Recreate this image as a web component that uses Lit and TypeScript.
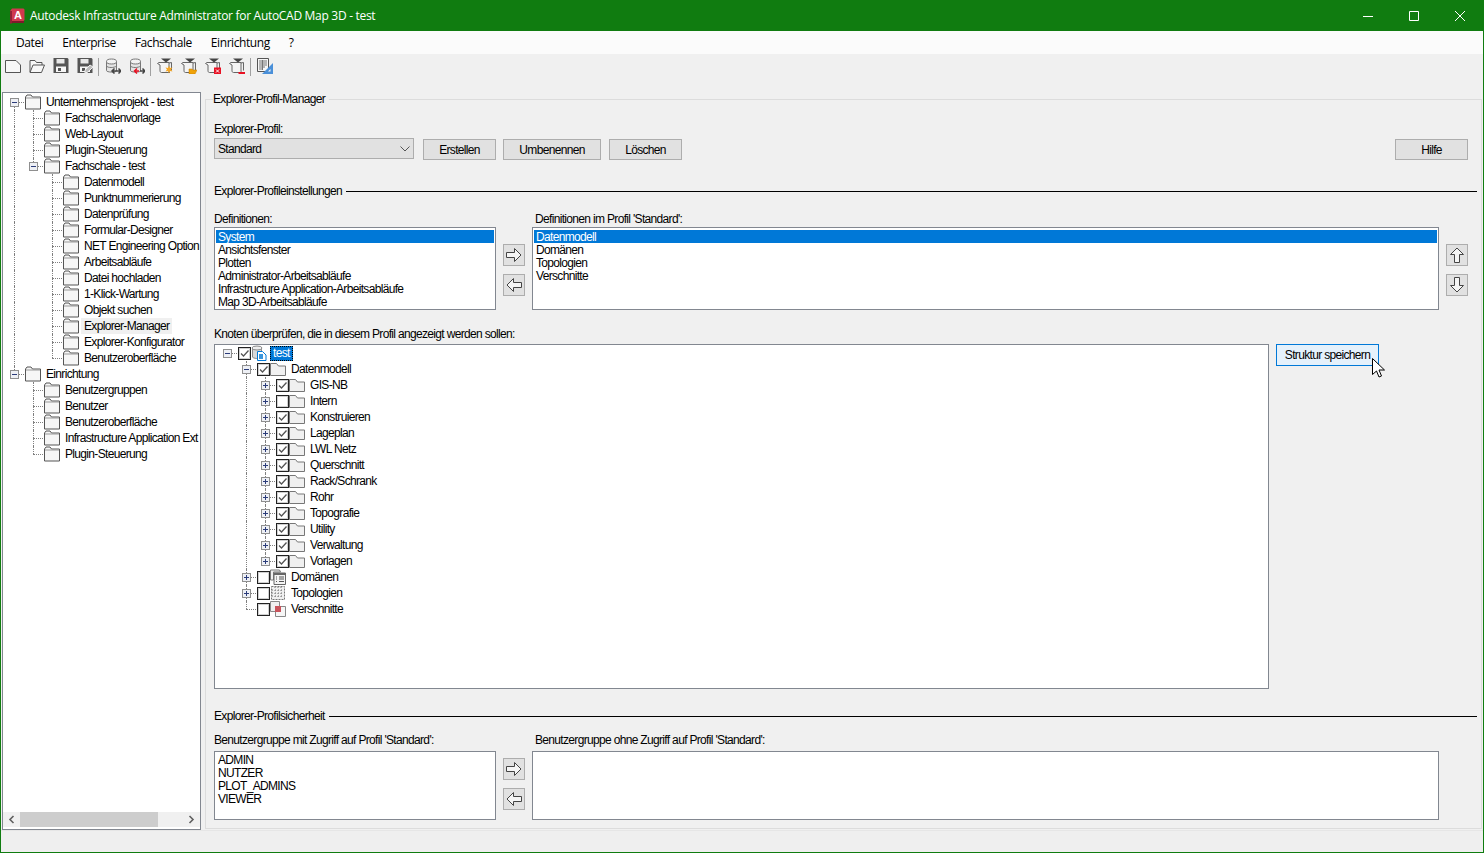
import { LitElement, html, css, svg } from "lit";
import { customElement } from "lit/decorators.js";

type Row = { c: string; x?: string; icon: string; t: string; sel?: boolean; chk?: boolean };

const folderA = svg`<path d="M.5 3 2 1h4l1.500 2h8v12H.5z" fill="#f6f6f6" stroke="#555"/><path d="M1 4h14" stroke="#999"/>`;
const folderB = svg`<path d="M.5 14.500V2.500h6l2 2.500h7v9.500z" fill="#f0f0f0" stroke="#777"/>`;

const icons: Record<string, unknown> = {
  fa: folderA,
  fb: folderB,
  db: svg`<path d="M1.500 3v9c0 1.500 8 2 9 1.500V3z" fill="#d8d8d8" stroke="#888"/><ellipse cx="6" cy="3" rx="5" ry="2" fill="#eee" stroke="#888"/><path d="M6.500 6.500h5l3.500 3.500v5.500H6.500z" fill="#fff" stroke="#0078d7"/><path d="M8 9h4v5H8z" fill="#3a96dd"/>`,
  dom: svg`<path d="M.5 1h9l1 2h-7v8H.5z" fill="#f0f0f0" stroke="#777"/><path d="M4 4h11.500v11.500H4z" fill="#f4f4f4" stroke="#666"/><path d="M4 4h11.500v2H4z" fill="#666"/><path d="M6 8h1M6 10h1M6 12.500h1M9 8h5M9 10h5M9 12.500h5" stroke="#555"/>`,
  top: svg`<path d="M1.500 1.500h13v13h-13z" fill="#f0f0f0" stroke="#777" stroke-dasharray="2 1"/><path d="M5 2v12M8 2v12M11 2v12M2 5h12M2 8h12M2 11h12" stroke="#777" stroke-dasharray="1 2"/>`,
  cut: svg`<path d="M.5.5h9v5h-4v5h-5z" fill="#f0f0f0" stroke="#888"/><path d="M5.500 5.500h10v10h-10z" fill="#f6f6f6" stroke="#888"/><path d="M5 5h6v6H5z" fill="#c9545c"/>`,
};

const scroll = svg`<path d="M2 4.500h10V13c0 1 .5 1.500 1 1.500H4.500C3 14.500 3 13 3 12V7L.5 5.500z" fill="#f4f4f4" stroke="#666"/><path d="M12 5l2.500-.5v8" fill="none" stroke="#666"/><path d="M4 .5h10L9 4.500z" fill="#444"/>`;
const floppy = svg`<path d="M.5 0h14l1 1v14H.5z" fill="#555"/><path d="M3.500 1h8v4.500h-8z" fill="#e8e8e8"/><path d="M3 8.500h10V14H3z" fill="#f6f6f6"/><path d="M5 10h3v3H5z" fill="#555"/>`;
const cyl = svg`<path d="M1.500 3.500v9c0 2 9 2 10 .5V3.500z" fill="#e4e4e4" stroke="#777"/><ellipse cx="6.500" cy="3.500" rx="5" ry="2.500" fill="#f2f2f2" stroke="#777"/><path d="M1.500 8c1 2 8 2 10 0" fill="none" stroke="#777"/>`;

const tools: unknown[] = [
  svg`<path d="M.5 2.500H11L15.500 7v7.500H.5z" fill="#f7f7f7" stroke="#555"/>`,
  svg`<path d="M1 14V2.500h5l1.500 2H13V7" fill="#f7f7f7" stroke="#555"/><path d="M1 14.500 4 7h11.500l-3 7.500z" fill="#f7f7f7" stroke="#555"/>`,
  floppy,
  svg`${floppy}<path d="M8 12 13 7l3 2-5 5-3 1z" fill="#bdbdbd" stroke="#f0f0f0"/>`,
  "sep",
  svg`${cyl}<path d="M7 13h9M9.500 10.500 7 13l2.500 2.500M13.500 10.500 16 13l-2.500 2.500" fill="none" stroke="#444" stroke-width="1.500"/>`,
  svg`${cyl}<path d="M6 13h4M8 10.500 5.500 13 8 15.500" fill="none" stroke="#e81123" stroke-width="1.500"/><path d="M11 13h5M13.500 10.500 16 13l-2.500 2.500" fill="none" stroke="#444" stroke-width="1.500"/>`,
  "sep",
  svg`${scroll}<path d="M12 7.500l1 2.500 2.500-.5L14 11.500l1.500 2-2.500-.5-1 2.500-1-2.500-2.500.5 1.500-2-1.500-2 2.500.5z" fill="#f5a623"/>`,
  svg`${scroll}<path d="M8 16v-5h3l1 1h4l-2 4z" fill="#f0a30a" stroke="#c77f00" stroke-width=".5"/>`,
  svg`${scroll}<path d="M9 9.500h7V16H9z" fill="#e81123"/><path d="M11 11.500l3 3M14 11.500l-3 3" stroke="#fff"/>`,
  svg`${scroll}<path d="M9.500 14h6.500v2H9.500z" fill="#e81123"/>`,
  "sep",
  svg`<path d="M.5.5h11v13H.5z" fill="#f6f6f6" stroke="#555"/><path d="M2 3h8M2 5h8M2 7h8M2 9h6M2 11h4M5.500 2v10" stroke="#777"/><path d="M16 5v11H5z" fill="#4a90d9"/><path d="M13.500 11v2.500H11z" fill="#f6f6f6"/>`,
];

const arrows = {
  r: { vb: "0 0 16 14", p: svg`<path d="M.5 4.500h8V.5L15 7l-6.500 6.500v-4h-8z" fill="#f5f5f5" stroke="#444"/>` },
  l: { vb: "0 0 16 14", p: svg`<path d="M15.500 4.500h-8V.5L1 7l6.500 6.500v-4h8z" fill="#f5f5f5" stroke="#444"/>` },
  u: { vb: "0 0 14 16", p: svg`<path d="M4.500 15.500v-8H.5L7 1l6.500 6.500h-4v8z" fill="#f5f5f5" stroke="#444"/>` },
  d: { vb: "0 0 14 16", p: svg`<path d="M4.500.5v8H.5L7 15l6.500-6.500h-4V.5z" fill="#f5f5f5" stroke="#444"/>` },
};

const left: Row[] = [
  { c: "rM", icon: "fa", t: "Unternehmensprojekt - test" },
  { c: "v t", icon: "fa", t: "Fachschalenvorlage" },
  { c: "v t", icon: "fa", t: "Web-Layout" },
  { c: "v t", icon: "fa", t: "Plugin-Steuerung" },
  { c: "v lM", icon: "fa", t: "Fachschale - test" },
  ...[
    "Datenmodell", "Punktnummerierung", "Datenprüfung", "Formular-Designer", "NET Engineering Option",
    "Arbeitsabläufe", "Datei hochladen", "1-Klick-Wartung", "Objekt suchen", "Explorer-Manager", "Explorer-Konfigurator",
  ].map((t) => ({ c: "v _ t", icon: "fa", t, sel: t === "Explorer-Manager" })),
  { c: "v _ l", icon: "fa", t: "Benutzeroberfläche" },
  { c: "lM", icon: "fa", t: "Einrichtung" },
  ...["Benutzergruppen", "Benutzer", "Benutzeroberfläche", "Infrastructure Application Ext"].map((t) => ({ c: "_ t", icon: "fa", t })),
  { c: "_ l", icon: "fa", t: "Plugin-Steuerung" },
];

const right: Row[] = [
  { c: "aM", icon: "db", t: "test", chk: true, sel: true },
  { c: "_ tM", icon: "fb", t: "Datenmodell", chk: true },
  ...["GIS-NB", "Intern", "Konstruieren", "Lageplan", "LWL Netz", "Querschnitt", "Rack/Schrank", "Rohr", "Topografie", "Utility", "Verwaltung"].map((t) => ({
    c: "_ v tP", icon: "fb", t, chk: t !== "Intern",
  })),
  { c: "_ v lP", icon: "fb", t: "Vorlagen", chk: true },
  { c: "_ tP", icon: "dom", t: "Domänen", chk: false },
  { c: "_ tP", icon: "top", t: "Topologien", chk: false },
  { c: "_ l", icon: "cut", t: "Verschnitte", chk: false },
];

@customElement("app-root")
export class AppRoot extends LitElement {
  static styles = css`
    :host {
      display: flex;
      flex-direction: column;
      width: 100vw;
      height: 100vh;
      box-sizing: border-box;
      background: #f0f0f0;
      border: 1px solid #107c10;
      border-top: 0;
      font: 12px/14px "Liberation Sans", Arial, sans-serif;
      letter-spacing: -0.67px;
      color: #000;
      overflow: hidden;
      position: relative;
    }
    .title {
      height: 31px;
      flex: none;
      background: #107c10;
      color: #fff;
      display: flex;
      align-items: center;
      font: 12px/16px "Open Sans", sans-serif;
      letter-spacing: 0;
    }
    .logo { width: 16px; height: 16px; margin: 0 5px 0 8px; }
    .title .cap { flex: 1; letter-spacing: -0.3px; }
    .wb { width: 46px; height: 31px; display: flex; align-items: center; justify-content: center; }
    .wb svg { width: 10px; height: 10px; }
    .menu {
      height: 23px;
      flex: none;
      background: #fbfbfb;
      display: flex;
      align-items: center;
      gap: 19px;
      padding-left: 15px;
      font: 12px/16px "Open Sans", sans-serif;
      letter-spacing: -0.42px;
    }
    .tools {
      height: 38px;
      flex: none;
      box-sizing: border-box;
      display: flex;
      align-items: flex-start;
      gap: 8px;
      padding: 4px 0 0 4px;
    }
    .tools svg { width: 16px; height: 16px; display: block; }
    .tools .sep { width: 1px; height: 18px; background: #a0a0a0; margin: 0 -2px 0 -3px; }
    .body { flex: 1; min-height: 0; display: flex; }
    .nav {
      width: 199px;
      flex: none;
      margin: 0 0 0 1px;
      height: 738px;
      box-sizing: border-box;
      border: 1px solid #828790;
      background: #fff;
      display: flex;
      flex-direction: column;
    }
    .nav .tree { flex: 1; min-height: 0; overflow: hidden; padding: 1px 0 0 2px; }
    .row { height: 16px; display: flex; align-items: center; white-space: nowrap; }
    .c { width: 19px; height: 16px; flex: none; position: relative; }
    .c::before, .c::after { content: ""; position: absolute; }
    .c.v::before { left: 9px; top: 0; bottom: 0; border-left: 1px dotted #808080; }
    .c.t::before { left: 9px; top: 0; bottom: 0; border-left: 1px dotted #808080; }
    .c.l::before { left: 9px; top: 0; height: 8px; border-left: 1px dotted #808080; }
    .c.r::before { left: 9px; top: 8px; bottom: 0; border-left: 1px dotted #808080; }
    .c.t::after, .c.l::after, .c.r::after, .c.a::after { left: 9px; top: 8px; width: 10px; border-top: 1px dotted #808080; }
    .exp {
      position: absolute;
      left: 5px;
      top: 4px;
      width: 9px;
      height: 9px;
      box-sizing: border-box;
      background: #eef0f5;
      border: 1px solid #8f8f8f;
      z-index: 1;
    }
    .exp::before { content: ""; position: absolute; left: 1px; top: 3px; width: 5px; height: 1px; background: #2b3c7a; }
    .exp.P::after { content: ""; position: absolute; left: 3px; top: 1px; width: 1px; height: 5px; background: #2b3c7a; }
    .ico { width: 16px; height: 16px; flex: none; display: block; }
    .spacer { width: 1px; flex: none; }
    .cb {
      width: 13px;
      height: 13px;
      box-sizing: border-box;
      flex: none;
      border: 1px solid #222;
      box-shadow: inset 0 0 0 1px rgba(0, 0, 0, 0.18);
      background: #fff;
      margin-left: 1px;
    }
    .cb svg { display: block; width: 11px; height: 11px; }
    .lb { margin-left: 2px; padding: 0 3px; line-height: 16px; height: 16px; }
    .lb.sel { background: #f0f0f0; }
    .check .lb.sel {
      background: #0078d7;
      color: #fff;
      height: 15px;
      line-height: 14px;
      box-sizing: border-box;
      outline: 1px dotted #000;
      outline-offset: -1px;
      padding: 0 3px;
      margin-left: 3px;
    }
    .hbar { height: 15px; flex: none; margin-bottom: 2px; display: flex; background: #f0f0f0; }
    .hbar .a { width: 17px; display: flex; align-items: center; justify-content: center; }
    .hbar .a svg { width: 7px; height: 9px; }
    .hbar .th { width: 138px; background: #cdcdcd; }
    .hbar .s { flex: 1; }
    fieldset {
      flex: 1;
      margin: 0 1px 1px 4px;
      padding: 0 4px 0 8px;
      min-width: 0;
      border: 1px solid #dcdcdc;
      display: flex;
      flex-direction: column;
    }
    legend { padding: 0 4px 0 0; margin-left: -1px; height: 14px; }
    .lab { height: 14px; }
    .profile { margin-top: 16px; }
    .ctrls { display: flex; align-items: flex-start; margin-top: 2px; }
    .combo {
      width: 200px;
      height: 21px;
      box-sizing: border-box;
      background: #e1e1e1;
      border: 1px solid #adadad;
      display: flex;
      align-items: center;
      justify-content: space-between;
      padding: 0 3px;
      margin-right: 9px;
    }
    .combo svg { width: 10px; height: 6px; }
    .btn {
      box-sizing: border-box;
      height: 21px;
      margin-top: 1px;
      background: #e1e1e1;
      border: 1px solid #adadad;
      display: flex;
      align-items: center;
      justify-content: center;
    }
    .w73 { width: 73px; }
    .w98 { width: 98px; margin: 1px 8px 0 7px; }
    .push { margin-left: auto; margin-right: 9px; }
    .sec { display: flex; align-items: center; gap: 4px; }
    .sec i { flex: 1; height: 1px; background: #000; }
    .s2 { margin-top: 24px; }
    .s3 { margin-top: 20px; }
    .grid { display: grid; grid-template-columns: 282px 36px 907px 36px; }
    .g1 { margin-top: 14px; }
    .g3 { margin-top: 10px; }
    .labs { grid-column: 1 / -1; display: grid; grid-template-columns: 282px 36px 907px; }
    .labs div:last-child { grid-column: 3; padding-left: 3px; }
    .g1 .labs { height: 15px; }
    .g3 .labs { height: 18px; }
    .list {
      box-sizing: border-box;
      background: #fff;
      border: 1px solid #828790;
      padding: 2px 1px 0;
      overflow: hidden;
    }
    .g1 .list { height: 83px; }
    .g3 .list { height: 69px; }
    .it { height: 13px; line-height: 13px; padding: 0 2px; box-sizing: border-box; }
    .g1 .it { padding-top: 1px; }
    .it.on { background: #0078d7; color: #fff; }
    .arr { display: flex; flex-direction: column; align-items: center; gap: 8px; }
    .g1 .arr { padding-top: 17px; }
    .g3 .arr { padding-top: 7px; }
    .ab {
      width: 22px;
      height: 22px;
      box-sizing: border-box;
      background: #e1e1e1;
      border: 1px solid #adadad;
      display: flex;
      align-items: center;
      justify-content: center;
    }
    .ab svg { width: 16px; height: 16px; display: block; }
    .q { margin-top: 17px; height: 17px; }
    .nodes { display: flex; align-items: flex-start; gap: 7px; }
    .check {
      width: 1055px;
      height: 345px;
      box-sizing: border-box;
      background: #fff;
      border: 1px solid #828790;
      padding: 0 0 0 3px;
    }
    .save {
      width: 103px;
      height: 22px;
      box-sizing: border-box;
      background: #e5f1fb;
      border: 1px solid #0078d7;
      display: flex;
      align-items: center;
      justify-content: center;
      position: relative;
    }
    .cursor { position: absolute; left: 95px; top: 13px; width: 13px; height: 20px; }
    .status { height: 22px; flex: none; box-sizing: border-box; border-top: 1px solid #e6e6e6; background: #efefef; }
  `;

  private row(r: Row, check: boolean) {
    const cells = r.c.split(" ");
    return html`<div class="row">
      ${cells.map((k) => {
        const base = k[0] === "_" ? "" : k[0];
        const ex = k[1];
        return html`<div class="c ${base}">${ex ? html`<div class="exp ${ex}"></div>` : ""}</div>`;
      })}
      ${check
        ? html`<div class="cb">${r.chk
            ? html`<svg viewBox="0 0 11 11"><path d="M2 5.500 4.500 8 9.500 2.500" fill="none" stroke="#555" stroke-width="1.300"/></svg>`
            : ""}</div>`
        : html`<div class="spacer"></div>`}
      <svg class="ico" viewBox="0 0 16 16">${icons[r.icon]}</svg>
      <div class="lb ${r.sel ? "sel" : ""}">${r.t}</div>
    </div>`;
  }

  private ab(k: keyof typeof arrows) {
    return html`<div class="ab"><svg viewBox=${arrows[k].vb}>${arrows[k].p}</svg></div>`;
  }

  render() {
    return html`
      <div class="title">
        <svg class="logo" viewBox="0 0 16 16">
          <path d="M1 3 3 .5h11.500l1 1V12l-1 1H3l-2 2.500z" fill="#d0394e" />
          <path d="M3 13h12v2H3z" fill="#7d1a2b" />
          <path d="M1 3h2v12.500H1z" fill="#8f2235" />
          <text x="9" y="10.500" font-size="11" font-weight="700" font-family="Liberation Sans" text-anchor="middle" fill="#fff">A</text>
        </svg>
        <div class="cap">Autodesk Infrastructure Administrator for AutoCAD Map 3D - test</div>
        <div class="wb"><svg viewBox="0 0 10 10"><path d="M0 5.500h10" stroke="#fff" /></svg></div>
        <div class="wb"><svg viewBox="0 0 10 10"><path d="M.5.5h9v9h-9z" fill="none" stroke="#fff" /></svg></div>
        <div class="wb"><svg viewBox="0 0 10 10"><path d="M0 0l10 10M10 0 0 10" stroke="#fff" /></svg></div>
      </div>
      <div class="menu"><span>Datei</span><span>Enterprise</span><span>Fachschale</span><span>Einrichtung</span><span>?</span></div>
      <div class="tools">
        ${tools.map((t) => (t === "sep" ? html`<div class="sep"></div>` : html`<svg viewBox="0 0 16 16">${t}</svg>`))}
      </div>
      <div class="body">
        <div class="nav">
          <div class="tree">${left.map((r) => this.row(r, false))}</div>
          <div class="hbar">
            <div class="a"><svg viewBox="0 0 7 9"><path d="M5.500 1 2 4.500 5.500 8" fill="none" stroke="#606060" stroke-width="1.600"/></svg></div>
            <div class="th"></div>
            <div class="s"></div>
            <div class="a"><svg viewBox="0 0 7 9"><path d="M1.500 1 5 4.500 1.500 8" fill="none" stroke="#606060" stroke-width="1.600"/></svg></div>
          </div>
        </div>
        <fieldset>
          <legend>Explorer-Profil-Manager</legend>
          <div class="lab profile">Explorer-Profil:</div>
          <div class="ctrls">
            <div class="combo"><span>Standard</span><svg viewBox="0 0 10 6"><path d="M.5.5 5 5 9.500.5" fill="none" stroke="#555"/></svg></div>
            <div class="btn w73">Erstellen</div>
            <div class="btn w98">Umbenennen</div>
            <div class="btn w73">Löschen</div>
            <div class="btn w73 push">Hilfe</div>
          </div>
          <div class="sec s2"><span>Explorer-Profileinstellungen</span><i></i></div>
          <div class="grid g1">
            <div class="labs"><div>Definitionen:</div><div>Definitionen im Profil 'Standard':</div></div>
            <div class="list">
              ${["System", "Ansichtsfenster", "Plotten", "Administrator-Arbeitsabläufe", "Infrastructure Application-Arbeitsabläufe", "Map 3D-Arbeitsabläufe"].map(
                (t, i) => html`<div class="it ${i === 0 ? "on" : ""}">${t}</div>`
              )}
            </div>
            <div class="arr">${this.ab("r")}${this.ab("l")}</div>
            <div class="list">
              ${["Datenmodell", "Domänen", "Topologien", "Verschnitte"].map((t, i) => html`<div class="it ${i === 0 ? "on" : ""}">${t}</div>`)}
            </div>
            <div class="arr">${this.ab("u")}${this.ab("d")}</div>
          </div>
          <div class="lab q">Knoten überprüfen, die in diesem Profil angezeigt werden sollen:</div>
          <div class="nodes">
            <div class="check">${right.map((r) => this.row(r, true))}</div>
            <div class="save">
              Struktur speichern
              <svg class="cursor" viewBox="0 0 13 20"><path d="M.5.500v16l4-3.500 2.500 6 2.500-1-2.500-6h5.500z" fill="#fff" stroke="#000"/></svg>
            </div>
          </div>
          <div class="sec s3"><span>Explorer-Profilsicherheit</span><i></i></div>
          <div class="grid g3">
            <div class="labs"><div>Benutzergruppe mit Zugriff auf Profil 'Standard':</div><div>Benutzergruppe ohne Zugriff auf Profil 'Standard':</div></div>
            <div class="list">
              ${["ADMIN", "NUTZER", "PLOT_ADMINS", "VIEWER"].map((t) => html`<div class="it">${t}</div>`)}
            </div>
            <div class="arr">${this.ab("r")}${this.ab("l")}</div>
            <div class="list"></div>
          </div>
        </fieldset>
      </div>
      <div class="status"></div>
    `;
  }
}
